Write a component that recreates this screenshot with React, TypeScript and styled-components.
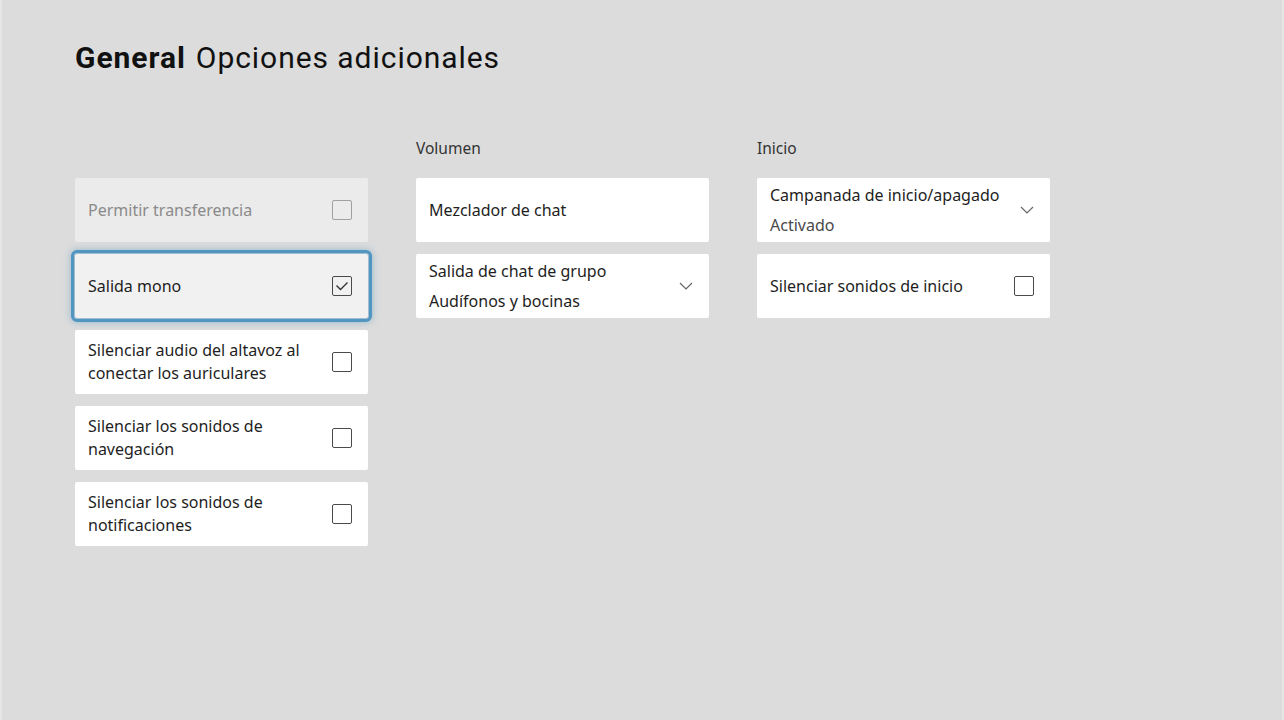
import React from "react";
import styled, { createGlobalStyle } from "styled-components";

const GlobalStyle = createGlobalStyle`
  html, body {
    margin: 0;
    padding: 0;
    background: #dcdcdc;
  }
  body {
    font-family: "Noto Sans", "Open Sans", sans-serif;
  }
`;

const Page = styled.div`
  width: 1284px;
  height: 720px;
  box-sizing: border-box;
  padding: 38px 0 0 73px;
  background: #dcdcdc;
  border-left: 2px solid #e6e6e6;
  border-right: 2px solid #e6e6e6;
  overflow: hidden;
`;

const Title = styled.h1`
  margin: 0;
  font-family: "Roboto", "Liberation Sans", sans-serif;
  font-size: 30px;
  font-weight: 400;
  letter-spacing: 0.95px;
  color: #111;
  line-height: 40px;
  b {
    font-weight: 700;
    margin-right: 10px;
  }
`;

const Columns = styled.div`
  display: grid;
  grid-template-columns: 293px 293px 293px;
  column-gap: 48px;
  margin-top: 60px;
`;

const Column = styled.div`
  display: flex;
  flex-direction: column;
  gap: 12px;
`;

const Header = styled.div`
  height: 40px;
  margin-bottom: -12px;
  font-size: 15.5px;
  color: #333;
  line-height: 20px;
`;

const Card = styled.div<{ $disabled?: boolean; $focused?: boolean }>`
  height: 64px;
  box-sizing: border-box;
  display: flex;
  align-items: center;
  justify-content: space-between;
  padding: 0 16px 0 13px;
  border-radius: 2px;
  background: ${(p) => (p.$disabled ? "#ebebeb" : p.$focused ? "#f1f1f1" : "#ffffff")};
  color: ${(p) => (p.$disabled ? "#8a8a8a" : "#1e1e1e")};
  ${(p) =>
    p.$focused &&
    `
    outline: 3px solid #5096c0;
    outline-offset: 1px;
    box-shadow: 0 0 7px 4px rgba(80, 150, 192, 0.5);
  `}
`;

const Label = styled.div`
  font-size: 16px;
  line-height: 23px;
  max-width: 232px;
`;

const Stack = styled.div`
  display: flex;
  flex-direction: column;
  gap: 7px;
  font-size: 16px;
  line-height: 23px;
`;

const Sub = styled.span`
  color: #4a4a4a;
`;

const Box = styled.span<{ $disabled?: boolean }>`
  width: 20px;
  height: 20px;
  box-sizing: border-box;
  border: 1.5px solid ${(p) => (p.$disabled ? "#a0a0a0" : "#4a4a4a")};
  border-radius: 2px;
  display: flex;
  align-items: center;
  justify-content: center;
  flex-shrink: 0;
`;

const Chevron = () => (
  <svg width="14" height="8" viewBox="0 0 14 8">
    <path d="M1 1 L7 7 L13 1" fill="none" stroke="#666" strokeWidth="1.2" />
  </svg>
);

const Check = ({ checked, disabled }: { checked?: boolean; disabled?: boolean }) => (
  <Box $disabled={disabled}>
    {checked && (
      <svg width="14" height="10" viewBox="0 0 14 10">
        <path d="M1.5 4.5 L5.5 8.5 L12.5 1.5" fill="none" stroke="#333" strokeWidth="1.4" />
      </svg>
    )}
  </Box>
);

export default function App() {
  return (
    <>
      <GlobalStyle />
      <Page>
        <Title>
          <b>General</b>Opciones adicionales
        </Title>
        <Columns>
          <Column>
            <Header />
            <Card $disabled>
              <Label>Permitir transferencia</Label>
              <Check disabled />
            </Card>
            <Card $focused>
              <Label>Salida mono</Label>
              <Check checked />
            </Card>
            <Card>
              <Label>Silenciar audio del altavoz al conectar los auriculares</Label>
              <Check />
            </Card>
            <Card>
              <Label>Silenciar los sonidos de navegación</Label>
              <Check />
            </Card>
            <Card>
              <Label>Silenciar los sonidos de notificaciones</Label>
              <Check />
            </Card>
          </Column>
          <Column>
            <Header>Volumen</Header>
            <Card>
              <Label>Mezclador de chat</Label>
            </Card>
            <Card>
              <Stack>
                <span>Salida de chat de grupo</span>
                <span>Audífonos y bocinas</span>
              </Stack>
              <Chevron />
            </Card>
          </Column>
          <Column>
            <Header>Inicio</Header>
            <Card>
              <Stack>
                <span>Campanada de inicio/apagado</span>
                <Sub>Activado</Sub>
              </Stack>
              <Chevron />
            </Card>
            <Card>
              <Label>Silenciar sonidos de inicio</Label>
              <Check />
            </Card>
          </Column>
        </Columns>
      </Page>
    </>
  );
}
